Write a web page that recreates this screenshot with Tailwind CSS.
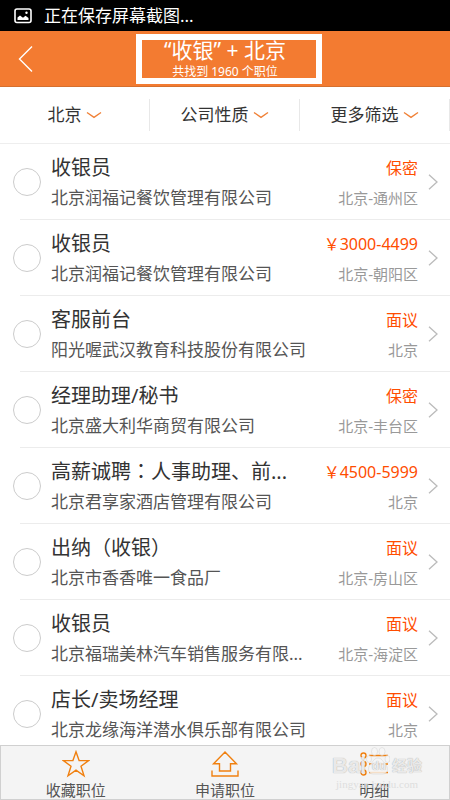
<!DOCTYPE html>
<html lang="zh-CN">
<head>
<meta charset="utf-8">
<meta name="viewport" content="width=device-width, initial-scale=1">
<title>收银 + 北京</title>
<script src="https://cdn.jsdelivr.net/npm/@tailwindcss/browser@4"></script>
</head>
<body class="flex h-screen flex-col overflow-hidden bg-white font-['Noto_Sans','Noto_Sans_CJK_SC',sans-serif] text-[#333]">
  <div class="flex h-[31px] shrink-0 items-center gap-3 bg-black px-[14px] text-[17px] leading-6 text-white">
    <svg class="h-4 w-[18px]" viewBox="0 0 18 16" fill="none" aria-hidden="true">
      <rect x="1" y="1" width="16" height="13.5" rx="2" stroke="white" stroke-width="1.6"/>
      <path d="M3.5 12V9.5L6 7.5l3 2.2 2.5-2 3 2.3v2z" fill="white"/>
      <circle cx="12.5" cy="4.8" r="1.2" fill="white"/>
    </svg>
    <span>正在保存屏幕截图...</span>
  </div>

  <header class="grid h-14 shrink-0 grid-cols-[1fr_auto_1fr] items-center border-b border-[#d5702f] bg-[#f37b31] px-4 text-white">
    <button type="button" aria-label="返回" class="flex w-5 justify-center">
      <svg class="h-7 w-5" viewBox="0 0 20 28" fill="none" stroke="white" stroke-width="1.4"><path d="M16 1.5 3.5 14 16 26.5"/></svg>
    </button>
    <div class="relative flex h-[50px] w-[178px] flex-col items-center pt-1 text-center">
      <h1 class="text-[21px] leading-6 whitespace-nowrap">“收银” + 北京</h1>
      <p class="text-xs leading-5 whitespace-nowrap">共找到 1960 个职位</p>
      <span class="absolute inset-y-0 left-0 w-[186px] border-6 border-white" aria-hidden="true"></span>
    </div>
  </header>

  <nav class="grid h-[57px] shrink-0 grid-cols-3 items-center border-b border-[#eee] text-[17px] leading-6">
    <div class="flex h-8 items-center justify-center gap-1 border-r border-[#e8e8e8]">
      <select aria-label="地区" class="appearance-none bg-transparent"><option>北京</option></select>
      <svg class="h-2 w-4" viewBox="0 0 16 8" fill="none" stroke="#f08137" stroke-width="1.4"><path d="M1 1.5 8 6.3 15 1.5"/></svg>
    </div>
    <div class="flex h-8 items-center justify-center gap-1 border-r border-[#e8e8e8]">
      <select aria-label="公司性质" class="appearance-none bg-transparent"><option>公司性质</option></select>
      <svg class="h-2 w-4" viewBox="0 0 16 8" fill="none" stroke="#f08137" stroke-width="1.4"><path d="M1 1.5 8 6.3 15 1.5"/></svg>
    </div>
    <div class="flex h-8 items-center justify-center gap-1 border-r border-[#e8e8e8]">
      <select aria-label="更多筛选" class="appearance-none bg-transparent"><option>更多筛选</option></select>
      <svg class="h-2 w-4" viewBox="0 0 16 8" fill="none" stroke="#f08137" stroke-width="1.4"><path d="M1 1.5 8 6.3 15 1.5"/></svg>
    </div>
  </nav>

  <main class="min-h-0 flex-1 overflow-hidden">
    <ul id="jobs"></ul>
  </main>

  <footer class="relative grid h-[55px] shrink-0 grid-cols-3 border border-[#d0d0d0] bg-[#f4f4f4] text-[15px] leading-4 text-[#555]">
    <button type="button" class="flex flex-col items-center gap-1 pt-1">
      <svg class="h-7 w-7" viewBox="0 0 28 28" fill="none" stroke="#f08010" stroke-width="1.4"><path d="M14 1.8 17.1 10.6H26.6L19 16.2 22 25.8 14 20.2 6 25.8 9 16.2 1.4 10.6H10.9Z"/></svg>
      <span>收藏职位</span>
    </button>
    <button type="button" class="flex flex-col items-center gap-1 pt-1">
      <svg class="h-7 w-7" viewBox="0 0 28 28" fill="none" stroke="#f08010" stroke-width="1.4"><path d="M14 2 25.5 13.8H19.5V21H8.5V13.8H2.5ZM1 20.5V26H27V20.5"/></svg>
      <span>申请职位</span>
    </button>
    <button type="button" class="flex flex-col items-center gap-1 pt-1">
      <svg class="h-7 w-7" viewBox="0 0 28 28" fill="none" stroke="#f08010" stroke-width="1.4"><circle cx="3.5" cy="5.5" r="2.5"/><circle cx="3.5" cy="14" r="2.5"/><circle cx="3.5" cy="22.5" r="2.5"/><path d="M9 5.5H28M9 14H28M9 22.5H28"/></svg>
      <span>明细</span>
    </button>
    <div class="pointer-events-none absolute top-0 right-[27px] flex w-[90px] flex-col items-center text-[#f4f4f4]/90" aria-hidden="true">
      <svg class="absolute top-0 left-[34px] h-8 w-6" viewBox="0 0 24 32" fill="#f6f6f6" fill-opacity=".8" stroke="#ccc" stroke-opacity=".6" stroke-width=".7"><ellipse cx="8.5" cy="5.5" rx="3" ry="4"/><ellipse cx="16" cy="5.5" rx="3" ry="4"/><ellipse cx="3" cy="13" rx="2.5" ry="3.5"/><ellipse cx="21.5" cy="13" rx="2.5" ry="3.5"/><path d="M12 12c4 0 5 4 8 7 3 4 1 9-3 9-3 0-7 0-10 0-4 0-6-5-3-9 3-3 4-7 8-7Z"/></svg>
      <div class="relative flex w-full items-center justify-between pt-2 font-['Liberation_Sans','Noto_Sans_CJK_SC',sans-serif] leading-6 font-bold text-shadow-[0_0_1px_#999]">
        <span class="text-[22px]">Bai</span><span class="text-xs">du</span><span class="text-[15px]">经验</span>
      </div>
      <span class="font-['Liberation_Serif',serif] text-[11px] leading-3 text-[#dedede]">jingyan.baidu.com</span>
    </div>
  </footer>

<script>
  const jobs = [
    ['收银员', '北京润福记餐饮管理有限公司', '保密', '北京-通州区'],
    ['收银员', '北京润福记餐饮管理有限公司', '￥3000-4499', '北京-朝阳区'],
    ['客服前台', '阳光喔武汉教育科技股份有限公司', '面议', '北京'],
    ['经理助理/秘书', '北京盛大利华商贸有限公司', '保密', '北京-丰台区'],
    ['高薪诚聘<span lang="zh-TW" class="font-[\'Noto_Sans_CJK_TC\',sans-serif]">：</span>人事助理、前...', '北京君享家酒店管理有限公司', '￥4500-5999', '北京'],
    ['出纳<span lang="zh-TW" class="font-[\'Noto_Sans_CJK_TC\',sans-serif]">（</span>收银<span lang="zh-TW" class="font-[\'Noto_Sans_CJK_TC\',sans-serif]">）</span>', '北京市香香唯一食品厂', '面议', '北京-房山区'],
    ['收银员', '北京福瑞美林汽车销售服务有限...', '面议', '北京-海淀区'],
    ['店长/卖场经理', '北京龙缘海洋潜水俱乐部有限公司', '面议', '北京']
  ];
  document.getElementById('jobs').innerHTML = jobs.map(([title, company, pay, place], i) => `
    <li class="relative flex h-[76px] items-center pr-3 pl-[13px] after:absolute after:right-0 after:bottom-0 after:left-5 after:h-px after:bg-[#ececec]">
      <input type="checkbox" aria-labelledby="job-${i}" class="size-7 shrink-0 appearance-none rounded-full border border-[#ccc] bg-white checked:bg-[#f37b31]">
      <a href="#job-${i}" class="ml-[10px] flex min-w-0 flex-1 items-center gap-[10px]">
        <span class="grid min-w-0 flex-1 grid-cols-[1fr_auto] whitespace-nowrap">
          <span id="job-${i}" class="text-xl leading-8">${title}</span>
          <span class="text-right text-base leading-8 text-[#ff4d00]">${pay}</span>
          <span class="text-[17px] leading-7 text-[#555]">${company}</span>
          <span class="text-right text-[15px] leading-7 text-[#999]">${place}</span>
        </span>
        <svg class="h-4 w-[10px] shrink-0" viewBox="0 0 10 16" fill="none" stroke="#bbb" stroke-width="1.3"><path d="M1 .7 9 8 1 15.3"/></svg>
      </a>
    </li>`).join('');
</script>
</body>
</html>
